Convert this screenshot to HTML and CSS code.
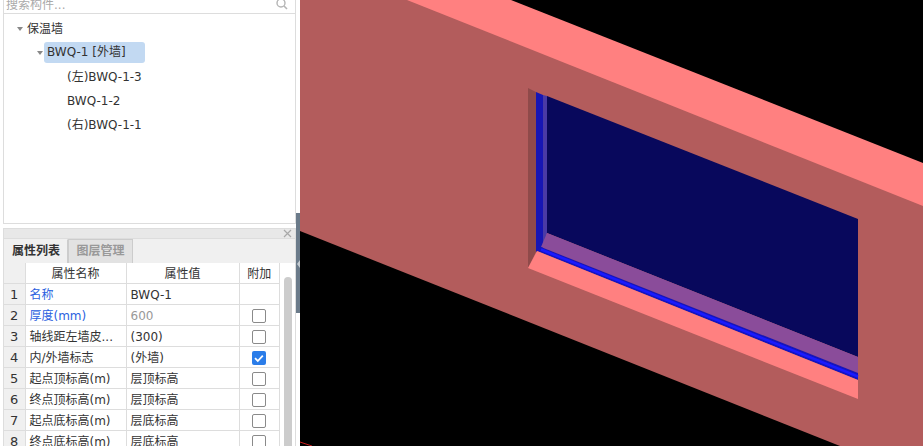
FILE: index.html
```html
<!DOCTYPE html>
<html lang="en">
  <head>
    <meta charset="UTF-8" />
    <meta name="viewport" content="width=device-width, initial-scale=1.0" />
    <title>保温墙</title>
    <link rel="stylesheet" href="styles.css">
  </head>
  <body>
    <div class="side">
      <div class="panels">
        <div class="search">
          <span class="search-text">搜索构件...</span>
          <svg class="search-icon" width="12" height="12" viewBox="0 0 12 12">
            <circle cx="5" cy="5" r="4" fill="none" stroke="#b5b5b5" stroke-width="1.4" />
            <path d="M8 8l3 3" stroke="#b5b5b5" stroke-width="1.6" />
          </svg>
        </div>

        <div class="tree">
          <div class="node level-0"><span class="arrow"></span>保温墙</div>
          <div class="node level-1"><span class="arrow"></span><span class="selected">BWQ-1 [外墙]</span></div>
          <div class="node level-2">(左)BWQ-1-3</div>
          <div class="node level-2">BWQ-1-2</div>
          <div class="node level-2">(右)BWQ-1-1</div>
        </div>

        <div class="props">
          <div class="props-head">
            <svg width="9" height="9" viewBox="0 0 9 9">
              <path d="M1 1l7 7M8 1l-7 7" stroke="#a8a8a8" stroke-width="1.2" />
            </svg>
          </div>
          <div class="tabs">
            <div class="tab active">属性列表</div>
            <div class="tab">图层管理</div>
          </div>
          <div class="grid-wrap">
            <table class="grid">
              <colgroup>
                <col class="col-num" />
                <col class="col-name" />
                <col class="col-value" />
                <col class="col-extra" />
              </colgroup>
              <tr>
                <th class="num"></th>
                <th>属性名称</th>
                <th>属性值</th>
                <th>附加</th>
              </tr>
              <tr>
                <td class="num">1</td>
                <td class="link">名称</td>
                <td>BWQ-1</td>
                <td></td>
              </tr>
              <tr>
                <td class="num">2</td>
                <td class="link">厚度(mm)</td>
                <td class="muted">600</td>
                <td class="check-cell"><span class="check"></span></td>
              </tr>
              <tr>
                <td class="num">3</td>
                <td>轴线距左墙皮...</td>
                <td>(300)</td>
                <td class="check-cell"><span class="check"></span></td>
              </tr>
              <tr>
                <td class="num">4</td>
                <td>内/外墙标志</td>
                <td>(外墙)</td>
                <td class="check-cell">
                  <span class="check on">
                    <svg width="14" height="14" viewBox="0 0 14 14">
                      <path d="M3 7.2l2.8 2.8 5-5.4" fill="none" stroke="#fff" stroke-width="1.8" />
                    </svg>
                  </span>
                </td>
              </tr>
              <tr>
                <td class="num">5</td>
                <td>起点顶标高(m)</td>
                <td>层顶标高</td>
                <td class="check-cell"><span class="check"></span></td>
              </tr>
              <tr>
                <td class="num">6</td>
                <td>终点顶标高(m)</td>
                <td>层顶标高</td>
                <td class="check-cell"><span class="check"></span></td>
              </tr>
              <tr>
                <td class="num">7</td>
                <td>起点底标高(m)</td>
                <td>层底标高</td>
                <td class="check-cell"><span class="check"></span></td>
              </tr>
              <tr>
                <td class="num">8</td>
                <td>终点底标高(m)</td>
                <td>层底标高</td>
                <td class="check-cell"><span class="check"></span></td>
              </tr>
            </table>
            <div class="scrollbar"></div>
          </div>
        </div>
      </div>

      <div class="splitter">
        <div class="splitter-grip"><span class="grip-arrow"></span></div>
      </div>
    </div>

    <svg class="scene" width="623" height="446" viewBox="300 0 623 446">
      <!-- wall face, runs under the top so no seam shows -->
      <polygon points="300,0 450,0 923,185 923,446 840,446 300,231" fill="#b35c5c" />
      <!-- wall top -->
      <polygon points="407,0 511,0 923,163 923,206" fill="#ff8080" />
      <!-- window opening -->
      <polygon points="528,88 536,92 536,252 528,268" fill="#8f4a4a" />
      <polygon points="536,92 543,95 543,248 536,252" fill="#1616b4" />
      <polygon points="543,95 547,96 547,233 543,248" fill="#4a3aa6" />
      <polygon points="547,96 858,219 858,357 547,233" fill="#08085c" />
      <polygon points="547,233 858,357 858,373 541,247" fill="#8a4c9a" />
      <polygon points="541,247 858,373 858,380 537,251" fill="#1414c0" />
      <line x1="541" y1="249.5" x2="858" y2="376.5" stroke="#1a1aff" stroke-width="2.5" />
      <polygon points="528,268 537,251 858,380 858,399" fill="#ff8080" />
      <!-- next wall edge -->
      <polyline points="300,442 312,446" fill="none" stroke="#c81e1e" stroke-width="1" />
    </svg>
  </body>
</html>
```

FILE: styles.css
```css
html,
body {
  height: 100%;
}

body {
  margin: 0;
  display: flex;
  height: 446px;
  overflow: hidden;
  background: #fff;
  color: #333;
  font-family: "DejaVu Sans", "Noto Sans CJK SC", sans-serif;
  font-size: 12px;
  line-height: 16px;
}

.side {
  display: flex;
  width: 300px;
  flex: none;
}

.panels {
  display: flex;
  flex-direction: column;
  width: 293px;
  margin-left: 3px;
}

.search {
  display: flex;
  flex: none;
  justify-content: space-between;
  height: 13px;
  padding: 0 7px 0 2px;
  overflow: hidden;
  border-bottom: 1px solid #ddd;
  border-left: 1px solid #ddd;
  border-right: 1px solid #ddd;
}

.search-text {
  margin-top: -4px;
  line-height: 18px;
  color: #aaa;
}

.search-icon {
  margin-top: -2px;
}

.tree {
  box-sizing: border-box;
  flex: none;
  height: 210px;
  padding-top: 3px;
  border: 1px solid #ddd;
  border-top: 0;
}

.node {
  display: flex;
  align-items: center;
  height: 24px;
}

.level-0 {
  padding-left: 13px;
}

.level-1 {
  padding-left: 33px;
}

.level-2 {
  padding-left: 63px;
}

.arrow {
  width: 0;
  height: 0;
  margin-right: 4px;
  border-top: 4px solid #888;
  border-left: 3.5px solid transparent;
  border-right: 3.5px solid transparent;
}

.selected {
  margin: -2px 0 0 -3px;
  padding: 0 3px;
  width: 95px;
  line-height: 21px;
  border-radius: 3px;
  background: #c2d9f2;
}

.props {
  display: flex;
  flex: none;
  flex-direction: column;
  margin-top: 4px;
  border-top: 1px solid #ddd;
  border-left: 1px solid #ddd;
  border-right: 1px solid #ddd;
}

.props-head {
  display: flex;
  justify-content: flex-end;
  align-items: center;
  height: 9px;
  padding-right: 3px;
  background: #e8e8e8;
  border-bottom: 1px solid #ddd;
}

.tabs {
  display: flex;
  height: 24px;
  background: #f0f0f0;
}

.tab {
  box-sizing: border-box;
  width: 65px;
  line-height: 22px;
  text-align: center;
  color: #999;
  font-weight: 700;
  background: #e2e2e2;
  border: 1px solid #ccc;
  border-bottom: 0;
}

.tab.active {
  width: 64px;
  color: #333;
  background: #f0f0f0;
  border-color: #f0f0f0;
  border-right-color: #ccc;
}

.grid-wrap {
  display: flex;
  align-items: flex-start;
}

.grid {
  width: 276px;
  flex: none;
  table-layout: fixed;
  border-collapse: collapse;
}

.col-num {
  width: 21px;
}

.col-name {
  width: 101px;
}

.col-value {
  width: 113px;
}

.grid tr {
  height: 21px;
}

.grid tr:first-child {
  height: 20px;
}

.grid th,
.grid td {
  box-sizing: border-box;
  padding: 2px 3px 0 4px;
  border: 1px solid #ddd;
  border-top: 0;
  white-space: nowrap;
  overflow: hidden;
}

.grid th {
  font-weight: 400;
  text-align: center;
  padding: 2px 0 0;
}

.grid .num {
  padding: 2px 0 0;
  font-size: 13px;
  text-align: center;
  background: #f0f0f0;
  border-left: 0;
}

.link {
  color: #2a5fe0;
}

.muted {
  color: #999;
}

.check-cell {
  text-align: center;
}

.grid .check-cell {
  padding: 2px 0 0;
}

.check {
  box-sizing: border-box;
  display: block;
  width: 14px;
  height: 14px;
  margin: 0 auto;
  border: 1px solid #8a8a8a;
  border-radius: 2px;
  background: #fff;
}

.check.on {
  border: 0;
  background: #2b7de9;
}

.check svg {
  display: block;
}

.scrollbar {
  width: 8px;
  height: 170px;
  margin: 14px 0 0 4px;
  border-radius: 4px 4px 0 0;
  background: #ccc;
}

.splitter {
  width: 4px;
  margin-top: 213px;
}

.splitter-grip {
  display: flex;
  justify-content: flex-end;
  height: 100px;
  background: #6b7b8a;
}

.grip-arrow {
  width: 0;
  height: 0;
  margin-top: 47px;
  border-top: 4px solid transparent;
  border-bottom: 4px solid transparent;
  border-right: 3px solid #c5ccd2;
}

.scene {
  display: block;
  flex: none;
  background: #000;
}
```
